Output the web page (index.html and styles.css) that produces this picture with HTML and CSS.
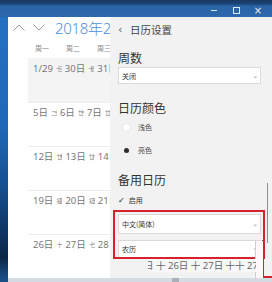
FILE: index.html
```html
<!DOCTYPE html>
<html lang="zh-CN">
<head>
<meta charset="utf-8">
<link rel="stylesheet" href="styles.css">
</head>
<body>
<div class="screen">
  <div class="titlebar">
    <div class="controls">
      <span class="ctl min"></span>
      <span class="ctl max"></span>
      <span class="ctl close">×</span>
    </div>
  </div>
  <div class="main">
    <div class="desktop"></div>
    <div class="calendar">
      <div class="nav">
        <svg class="chev" width="12" height="7" viewBox="0 0 12 7"><path d="M0.5 6.5 L6 1 L11.5 6.5" fill="none" stroke="#9a9a9a" stroke-width="1"/></svg>
        <svg class="chev" width="12" height="7" viewBox="0 0 12 7"><path d="M0.5 0.5 L6 6 L11.5 0.5" fill="none" stroke="#9a9a9a" stroke-width="1"/></svg>
        <span class="month">2018年2月</span>
      </div>
      <div class="weekdays">
        <span>周一</span><span>周二</span><span>周三</span><span>周四</span>
      </div>
      <div class="week first"><span class="d">1/29</span><span class="l">十三</span><span class="d">30日</span><span class="l">十四</span><span class="d">31日</span><span class="l">十五</span></div>
      <div class="week"><span class="d">5日</span><span class="l">二十</span><span class="d">6日</span><span class="l">廿一</span><span class="d">7日</span><span class="l">廿二</span></div>
      <div class="week"><span class="d">12日</span><span class="l">廿七</span><span class="d">13日</span><span class="l">廿八</span><span class="d">14日</span><span class="l">廿九</span></div>
      <div class="week"><span class="d">19日</span><span class="l">初四</span><span class="d">20日</span><span class="l">初五</span><span class="d">21日</span><span class="l">初六</span></div>
      <div class="week"><span class="d">26日</span><span class="l">十一</span><span class="d">27日</span><span class="l">十二</span><span class="d">28日</span><span class="l">十三</span></div>
    </div>
    <div class="settings">
      <div class="head"><span class="back">‹</span><span class="head-title">日历设置</span></div>
      <div class="label first-label">周数</div>
      <div class="select s1"><span>关闭</span><span class="caret">⌄</span></div>
      <div class="label l2">日历颜色</div>
      <div class="radio r1"><span class="dot"></span><span>浅色</span></div>
      <div class="radio r2"><span class="dot on"></span><span>亮色</span></div>
      <div class="label l3">备用日历</div>
      <div class="check"><span class="tick">✓</span><span>启用</span></div>
      <div class="select s2"><span>中文(简体)</span><span class="caret">⌄</span></div>
      <div class="select s3"><span>农历</span><span class="caret up">⌃</span></div>
      <div class="scrollbar"></div>
    </div>
  </div>
  <div class="taskbar"><span class="tb-mark"></span></div>

  <div class="mark mark-a"></div>
  <div class="mark mark-b"></div>
  <div class="ghost-edge"></div>
  <div class="ghost-row"><span class="clip">日</span> 十 26日 十 27日 十十 27:3日</div>
</div>
</body>
</html>
```

FILE: styles.css
```css
html, body {
  margin: 0;
  padding: 0;
}
body {
  width: 272px;
  height: 282px;
  overflow: hidden;
  font-family: "Noto Sans", "Noto Sans CJK SC", sans-serif;
  background: #f2f2f2;
}
.screen {
  position: relative;
  width: 272px;
  height: 282px;
  overflow: hidden;
  display: flex;
  flex-direction: column;
}
.titlebar {
  height: 17px;
  flex: none;
  background: linear-gradient(#173761 0, #1d4578 4px, #2a64a6 6px, #2c68ab 17px);
  display: flex;
  justify-content: flex-end;
}
.controls {
  display: flex;
  align-items: center;
  padding-top: 3px;
}
.ctl {
  width: 22px;
  height: 14px;
  display: flex;
  align-items: center;
  justify-content: center;
  color: #e8eef6;
}
.ctl.min::before {
  content: "";
  width: 6px;
  height: 1px;
  background: #dfe8f3;
}
.ctl.max::before {
  content: "";
  width: 5px;
  height: 5px;
  border: 1px solid #dfe8f3;
}
.ctl.close {
  font-family: "DejaVu Sans", sans-serif;
  font-size: 10px;
  margin-right: 3px;
}
.main {
  display: flex;
  height: 261px;
  flex: none;
}
.desktop {
  width: 8px;
  flex: none;
  background: linear-gradient(#2470c2 0, #1f68b8 110px, #15508f 170px, #0f3563 215px, #0b2747 240px, #1a4f86 262px);
}
.calendar {
  width: 102px;
  flex: none;
  background: #fff;
  overflow: hidden;
  white-space: nowrap;
}
.nav {
  height: 21px;
  display: flex;
  align-items: center;
  padding-left: 5px;
  gap: 8px;
}
.chev { flex: none; }
.month {
  font-family: "Noto Sans", "Noto Sans CJK SC", sans-serif;
  font-weight: 300;
  font-size: 15px;
  color: #4d8fd8;
  margin-left: 2px;
  letter-spacing: -0.3px;
}
.weekdays {
  height: 20px;
  display: flex;
  align-items: center;
  padding-left: 27px;
  font-family: "Noto Sans CJK SC", sans-serif;
  font-size: 7px;
  color: #8a8a8a;
}
.weekdays span { width: 31px; flex: none; }
.week {
  height: 44px;
  box-sizing: border-box;
  margin-left: 20px;
  padding: 3px 0 0 5px;
  border-top: 1px solid #ececec;
  line-height: 13px;
  font-size: 9.5px;
  color: #777;
  font-family: "Noto Sans", "Noto Sans CJK SC", sans-serif;
}
.week.first {
  background: #f4f4f4;
  border-top-color: #f4f4f4;
}
.week .l {
  display: inline-block;
  width: 6px;
  overflow: hidden;
  vertical-align: top;
  font-family: "Noto Sans CJK SC", sans-serif;
  font-size: 6px;
  letter-spacing: -3px;
  color: #8a8a8a;
  margin: 0 3px;
}
.settings {
  flex: 1;
  position: relative;
  background: #f2f2f2;
  padding-left: 8px;
  padding-right: 11px;
  display: flex;
  flex-direction: column;
  font-family: "Noto Sans CJK SC", sans-serif;
  color: #2e2e2e;
}
.head {
  height: 25px;
  display: flex;
  align-items: center;
  font-size: 10.5px;
  color: #444;
}
.back {
  font-family: "DejaVu Sans", sans-serif;
  font-size: 11px;
  width: 12px;
  color: #555;
}
.label {
  font-size: 12px;
  line-height: 16px;
  color: #333;
}
.first-label { margin-top: 8px; }
.select {
  background: #fff;
  border: 1px solid #dadada;
  display: flex;
  align-items: center;
  justify-content: space-between;
  padding: 0 2px 0 3px;
  font-size: 7px;
  color: #333;
  box-sizing: border-box;
}
.s1 { margin-top: 1px; height: 17px; }
.caret {
  font-family: "DejaVu Sans", sans-serif;
  font-size: 7px;
  color: #999;
}
.caret.up { margin-top: 3px; }
.l2 { margin-top: 16px; }
.radio {
  display: flex;
  align-items: center;
  height: 16px;
  font-size: 7px;
  color: #444;
  padding-left: 4px;
  gap: 7px;
}
.r1 { margin-top: 3px; }
.r2 { margin-top: 7px; }
.dot {
  width: 9px;
  height: 9px;
  border-radius: 50%;
  background: #fff;
  border: 1px solid #e6e6e6;
  box-sizing: border-box;
  display: flex;
  align-items: center;
  justify-content: center;
}
.dot.on {
  background: transparent;
  border-color: #efefef;
}
.dot.on::before {
  content: "";
  width: 5px;
  height: 5px;
  border-radius: 50%;
  background: #2b2b2b;
}
.l3 { margin-top: 14px; }
.check {
  margin-top: 4px;
  height: 16px;
  display: flex;
  align-items: center;
  font-size: 7px;
  gap: 4px;
  color: #333;
}
.tick {
  font-family: "DejaVu Sans", sans-serif;
  font-size: 8px;
  color: #222;
}
.s2 { margin-top: 6px; height: 20px; }
.s3 { margin-top: 6px; height: 18px; }
.scrollbar {
  position: absolute;
  left: 157px;
  top: 166px;
  width: 1px;
  height: 60px;
  background: #8d8d8d;
}
.taskbar {
  flex: 1;
  background: linear-gradient(90deg, #1a4f86 0, #1a4f86 8px, #d6dbe2 8px, #d6dbe2 100%);
  position: relative;
}
.tb-mark {
  position: absolute;
  left: 172px;
  top: 0;
  width: 7px;
  height: 4px;
  background: #a9b0b8;
}
.mark {
  position: absolute;
  box-sizing: border-box;
  border: 2px solid #d7222b;
}
.mark-a {
  left: 113px;
  top: 210px;
  width: 152px;
  height: 49px;
}
.mark-b {
  left: 262px;
  top: 240px;
  width: 20px;
  height: 38px;
  border-top: none;
  border-right: none;
}
.ghost-edge {
  position: absolute;
  left: 255px;
  top: 241px;
  width: 7px;
  height: 37px;
  background: #fafafa;
  border-left: 1px solid #cfcfcf;
}
.ghost-row {
  position: absolute;
  left: 148px;
  top: 259px;
  width: 108px;
  height: 13px;
  background: #f7f7f7;
  overflow: hidden;
  white-space: nowrap;
  font-family: "Noto Sans", "Noto Sans CJK SC", sans-serif;
  font-size: 9.5px;
  line-height: 13px;
  color: #666;
}
.ghost-row .clip {
  display: inline-block;
  margin-left: -4px;
}
```
